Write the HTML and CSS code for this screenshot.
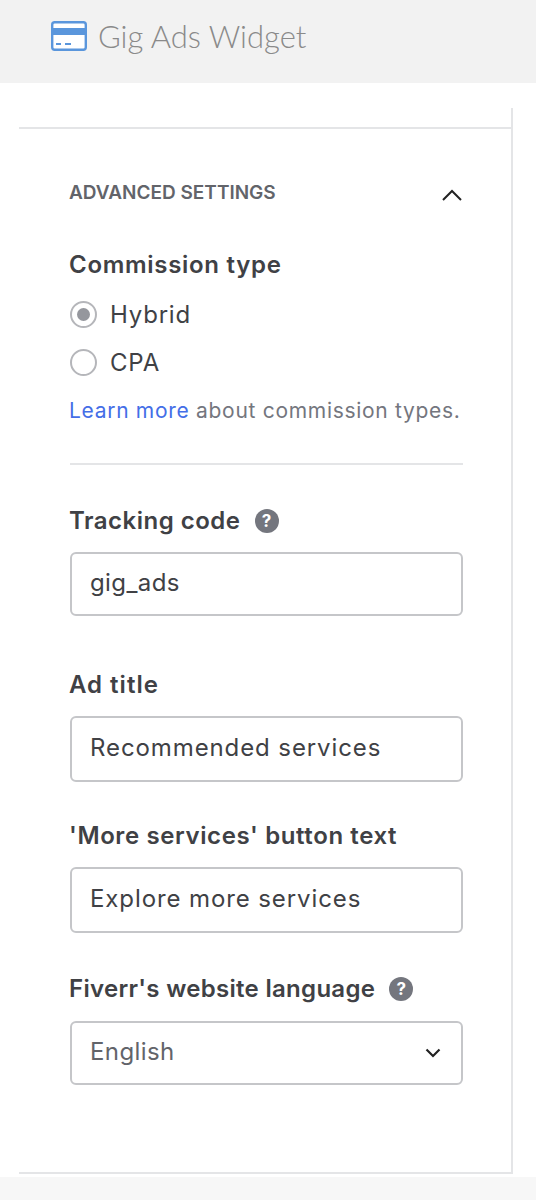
FILE: index.html
```html
<!DOCTYPE html>
<html lang="en">
<head>
    <meta charset="UTF-8">
    <meta name="viewport" content="width=device-width, initial-scale=1.0">
    <title>Gig Ads Widget</title>
    <link rel="stylesheet" href="styles.css">
</head>
<body>
    <header class="top-bar">
        <svg class="card-icon" width="36" height="30" viewBox="0 0 36 30">
            <rect x="1.2" y="1.2" width="33.6" height="27.6" rx="2.5" fill="#fff" stroke="#5a96dc" stroke-width="2.4"/>
            <rect x="2" y="7" width="32" height="7" fill="#5a96dc"/>
            <rect x="5" y="22" width="5" height="2" fill="#5a96dc"/>
            <rect x="14" y="22" width="6" height="2" fill="#5a96dc"/>
        </svg>
        <h1>Gig Ads Widget</h1>
    </header>
    <main class="panel">
        <div class="panel-rule"></div>
        <section class="settings">
            <div class="settings-head">
                <h2>ADVANCED SETTINGS</h2>
                <svg width="22" height="14" viewBox="0 0 22 14">
                    <path d="M2 12 L11 3 L20 12" fill="none" stroke="#222" stroke-width="2"/>
                </svg>
            </div>

            <h3 class="field-label commission-label">Commission type</h3>
            <div class="radio-row">
                <span class="radio checked"></span>
                <span>Hybrid</span>
            </div>
            <div class="radio-row">
                <span class="radio"></span>
                <span>CPA</span>
            </div>
            <p class="hint"><a href="#">Learn more</a> about commission types.</p>

            <hr class="divider">

            <h3 class="field-label tracking-label">Tracking code <span class="help">?</span></h3>
            <div class="input tracking">gig_ads</div>

            <h3 class="field-label ad-title">Ad title</h3>
            <div class="input">Recommended services</div>

            <h3 class="field-label more-label">'More services' button text</h3>
            <div class="input">Explore more services</div>

            <h3 class="field-label language-label">Fiverr's website language <span class="help">?</span></h3>
            <div class="input select">
                <span>English</span>
                <svg width="16" height="10" viewBox="0 0 16 10">
                    <path d="M1.5 1.5 L8 8 L14.5 1.5" fill="none" stroke="#222" stroke-width="2.2"/>
                </svg>
            </div>
        </section>
    </main>
    <div class="bottom-strip"></div>
</body>
</html>
```

FILE: styles.css
```css
body {
    font-family: Inter, "Noto Sans", sans-serif;
    margin: 0;
    padding: 0;
    background-color: white;
    color: #404145;
}
.top-bar {
    display: flex;
    align-items: center;
    height: 83px;
    padding: 0 0 11px 51px;
    box-sizing: border-box;
    background-color: #f2f2f2;
}
.top-bar h1 {
    margin: 0 0 0 11px;
    font-family: Lato, sans-serif;
    font-size: 31px;
    font-weight: 300;
    color: #8a8a8a;
    line-height: 36px;
}
.panel {
    margin: 25px 0 0 19px;
    width: 494px;
    height: 1066px;
    box-sizing: border-box;
    border-right: 2px solid #e4e5e7;
    border-bottom: 2px solid #e4e5e7;
}
.panel-rule {
    height: 19px;
    border-bottom: 2px solid #e4e5e7;
}
.settings {
    padding: 0 0 0 51px;
    width: 393px;
}
.settings-head {
    display: flex;
    align-items: center;
    justify-content: space-between;
    height: 20px;
    margin-top: 53px;
}
.settings-head h2 {
    margin: 0 0 0 -1px;
    font-size: 19px;
    font-weight: 600;
    color: #62646a;
}
.settings-head svg {
    margin-top: 6px;
}
.field-label {
    margin: 0 0 18px -1px;
    font-size: 24px;
    font-weight: 600;
    line-height: 28px;
    letter-spacing: 0.4px;
    display: flex;
    align-items: center;
    gap: 14px;
}
.commission-label {
    margin-top: 49px;
    margin-bottom: 0;
    letter-spacing: 0.7px;
}
.radio-row {
    display: flex;
    align-items: center;
    gap: 13px;
    height: 28px;
    margin-top: 21px;
    font-size: 24px;
    letter-spacing: 0.8px;
}
.radio-row + .radio-row {
    margin-top: 20px;
}
.radio {
    width: 27px;
    height: 27px;
    box-sizing: border-box;
    border: 2px solid #b5b6ba;
    border-radius: 50%;
    background-color: white;
    display: flex;
    align-items: center;
    justify-content: center;
}
.radio.checked::after {
    content: "";
    width: 13px;
    height: 13px;
    border-radius: 50%;
    background-color: #95979d;
}
.hint {
    margin: 22px 0 0 -1px;
    font-size: 21px;
    line-height: 26px;
    color: #74767e;
    white-space: nowrap;
    letter-spacing: 0.7px;
}
.hint a {
    color: #446ee7;
    text-decoration: none;
}
.divider {
    margin: 39px 0 0 0;
    border: none;
    height: 2px;
    background-color: #e4e5e7;
}
.help {
    display: inline-flex;
    align-items: center;
    justify-content: center;
    width: 24px;
    height: 24px;
    border-radius: 50%;
    background-color: #74767e;
    color: white;
    font-size: 17px;
    font-weight: 700;
    letter-spacing: 0;
}
.input {
    display: flex;
    align-items: center;
    height: 66px;
    box-sizing: border-box;
    padding: 0 18px 3px;
    border: 2px solid #c5c6c9;
    border-radius: 6px;
    font-size: 24px;
    letter-spacing: 0.9px;
}
.tracking {
    height: 64px;
    letter-spacing: 0.4px;
}
.select {
    justify-content: space-between;
    height: 64px;
    color: #62646a;
    padding-right: 20px;
    letter-spacing: 0.4px;
}
.select svg {
    margin-top: 3px;
}
.tracking-label {
    margin-top: 42px;
    margin-bottom: 17px;
    letter-spacing: 0.5px;
}
.ad-title {
    margin-top: 55px;
    margin-bottom: 17px;
    letter-spacing: 1px;
}
.more-label {
    margin-top: 40px;
    margin-bottom: 17px;
    letter-spacing: 0.6px;
}
.language-label {
    margin-top: 42px;
    margin-bottom: 18px;
    letter-spacing: 0.3px;
}
.bottom-strip {
    height: 23px;
    margin-top: 3px;
    background-color: #f7f7f7;
}
```
